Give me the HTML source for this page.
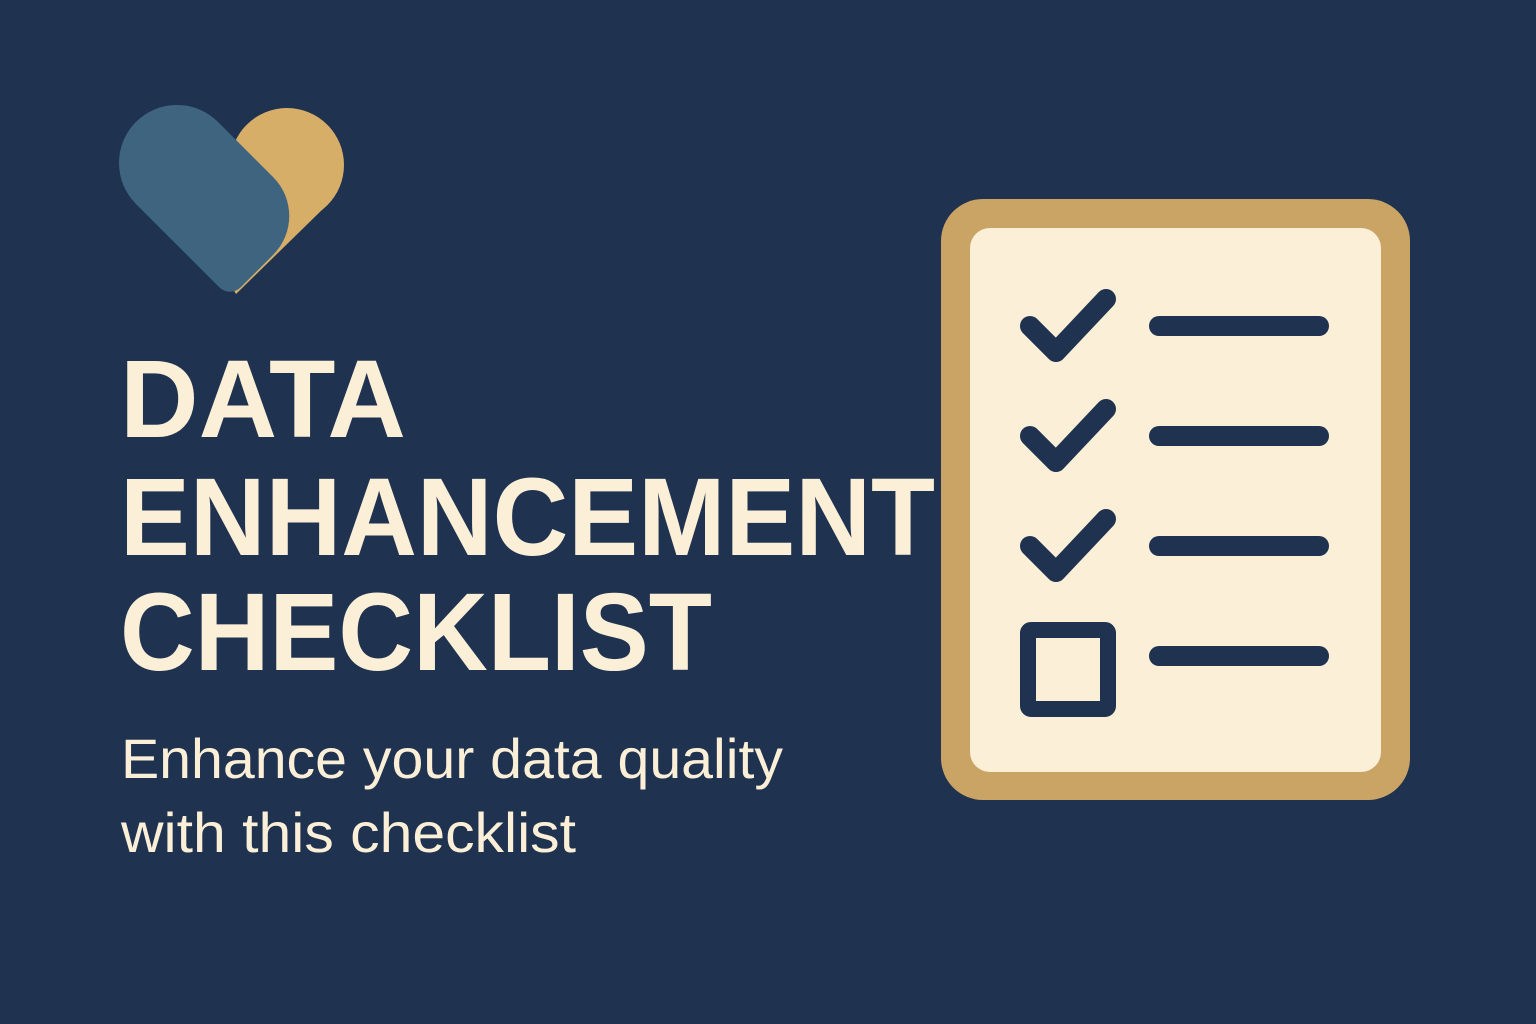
<!DOCTYPE html>
<html><head><meta charset="utf-8"><style>
html,body{margin:0;padding:0;background:#1f324f;}
svg{display:block}
</style></head><body>
<svg width="1536" height="1024" viewBox="0 0 1536 1024" xmlns="http://www.w3.org/2000/svg">
<rect width="1536" height="1024" fill="#1f324f"/>
<!-- heart logo -->
<circle cx="287" cy="165" r="57" fill="#d6ae68"/>
<polygon points="287,165 327,205 236,294 200,232" fill="#d6ae68"/>
<g transform="translate(230,298) rotate(45)">
<path d="M -133 0 L -15 0 A 15 15 0 0 0 0 -15 L 0 -61 A 55 55 0 0 0 -55 -116 L -133 -116 A 58 58 0 0 0 -133 0 Z" fill="#3e6480"/>
</g>
<!-- title -->
<g font-family="Liberation Sans, sans-serif" font-weight="bold" font-size="110" fill="#fbefd8">
<text x="120" y="437" textLength="286" lengthAdjust="spacingAndGlyphs">DATA</text>
<text x="120" y="555" textLength="815" lengthAdjust="spacingAndGlyphs">ENHANCEMENT</text>
<text x="120" y="670" textLength="592" lengthAdjust="spacingAndGlyphs">CHECKLIST</text>
</g>
<g font-family="Liberation Sans, sans-serif" font-size="56" fill="#fbefd8">
<text x="121" y="778" textLength="662" lengthAdjust="spacingAndGlyphs">Enhance your data quality</text>
<text x="121" y="852" textLength="455" lengthAdjust="spacingAndGlyphs">with this checklist</text>
</g>
<!-- card -->
<rect x="941" y="199" width="469" height="601" rx="42" fill="#c9a464"/>
<rect x="970" y="228" width="411" height="544" rx="20" fill="#fbefd8"/>
<g stroke="#1f324f" stroke-width="20" stroke-linecap="round" stroke-linejoin="round" fill="none">
<polyline points="1030,326 1056,352 1106,299"/>
<polyline points="1030,436 1056,462 1106,409"/>
<polyline points="1030,546 1056,572 1106,519"/>
<line x1="1159" y1="326" x2="1319" y2="326"/>
<line x1="1159" y1="436" x2="1319" y2="436"/>
<line x1="1159" y1="546" x2="1319" y2="546"/>
<line x1="1159" y1="656" x2="1319" y2="656"/>
</g>
<rect x="1028" y="630" width="80" height="79" rx="3" fill="none" stroke="#1f324f" stroke-width="16"/>
</svg>
</body></html>
